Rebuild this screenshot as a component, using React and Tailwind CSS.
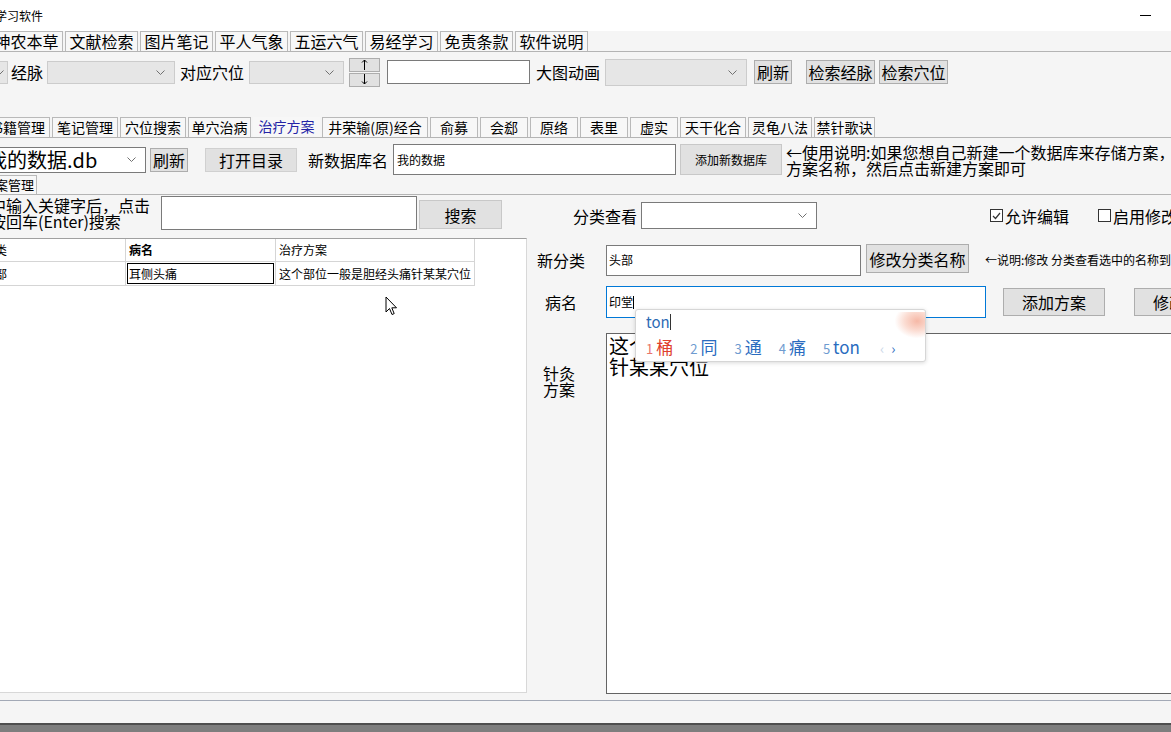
import React from 'react';

const topTabs = ['神农本草', '文献检索', '图片笔记', '平人气象', '五运六气', '易经学习', '免责条款', '软件说明'];

const subTabs = [
  { label: '书籍管理', w: 'w-[66px] -ml-[16px]' },
  { label: '笔记管理', w: 'w-[66px]' },
  { label: '穴位搜索', w: 'w-[66px]' },
  { label: '单穴治病', w: 'w-[63px]' },
  { label: '治疗方案', w: 'w-[67px]', active: true },
  { label: '井荣输(原)经合', w: 'w-[106px]' },
  { label: '俞募', w: 'w-[48px]' },
  { label: '会郄', w: 'w-[48px]' },
  { label: '原络', w: 'w-[48px]' },
  { label: '表里', w: 'w-[48px]' },
  { label: '虚实', w: 'w-[48px]' },
  { label: '天干化合', w: 'w-[66px]' },
  { label: '灵龟八法', w: 'w-[64px]' },
  { label: '禁针歌诀', w: 'w-[61px]' },
];

const candidates = ['同', '通', '痛', 'ton'];

function Chevron() {
  return (
    <svg width="9" height="5" viewBox="0 0 9 5" className="shrink-0">
      <polyline points="0.5,0.5 4.5,4.5 8.5,0.5" fill="none" stroke="#707070" strokeWidth="1" />
    </svg>
  );
}

function Combo({ className = '', children }) {
  return (
    <div className={`flex items-center justify-between pr-[9px] shrink-0 border ${className}`}>
      <div className="overflow-hidden whitespace-nowrap">{children}</div>
      <Chevron />
    </div>
  );
}

function Btn({ className = '', children }) {
  return (
    <div className={`flex items-center justify-center shrink-0 bg-[#e1e1e1] border border-[#adadad] whitespace-nowrap overflow-hidden ${className}`}>
      {children}
    </div>
  );
}

function Arrow({ down }) {
  return (
    <svg width="7" height="11" viewBox="0 0 7 11" className={down ? 'rotate-180' : ''}>
      <line x1="3.5" y1="1" x2="3.5" y2="11" stroke="#000" strokeWidth="1" />
      <polyline points="1,3.5 3.5,1 6,3.5" fill="none" stroke="#000" strokeWidth="1" />
    </svg>
  );
}

function Check({ checked }) {
  return (
    <span className="w-[13px] h-[13px] border border-[#333] bg-white flex items-center justify-center shrink-0">
      {checked && (
        <svg width="9" height="8" viewBox="0 0 9 8">
          <polyline points="1,4 3.5,6.5 8,1" fill="none" stroke="#333" strokeWidth="1.2" />
        </svg>
      )}
    </span>
  );
}

export default function App() {
  return (
    <div className="w-[1171px] h-[732px] overflow-hidden bg-[#f5f5f5] flex flex-col relative text-black font-['Noto_Sans_CJK_SC',sans-serif]">
      {/* title bar */}
      <div className="h-[31px] bg-white flex items-center justify-between shrink-0">
        <span className="text-[12px] leading-none -ml-[5px]">学习软件</span>
        <span className="w-[11px] h-[1px] bg-black mr-[20px]" />
      </div>

      {/* main tabs */}
      <div className="h-[21px] flex items-end border-b border-[#b4b4b4] shrink-0">
        {topTabs.map((t, i) => (
          <div
            key={t}
            className={`w-[73px] mr-[2px] h-[20px] border border-b-0 border-[#b9b9b9] bg-[#f7f7f7] text-[16px] leading-[19px] text-center shrink-0 ${i === 0 ? '-ml-[10px]' : ''}`}
          >
            {t}
          </div>
        ))}
      </div>

      {/* meridian row */}
      <div className="mt-[5px] h-[30px] flex items-center text-[16px] leading-none whitespace-nowrap shrink-0">
        <div className="-ml-[14px] w-[22px] h-[23px] bg-[#e6e6e6] border border-[#cccccc] flex items-center justify-end pr-[3px] shrink-0">
          <Chevron />
        </div>
        <span className="ml-[3px]">经脉</span>
        <Combo className="ml-[4px] w-[128px] h-[23px] bg-[#e6e6e6] border-[#cccccc]" />
        <span className="ml-[5px]">对应穴位</span>
        <Combo className="ml-[5px] w-[95px] h-[23px] bg-[#e6e6e6] border-[#cccccc]" />
        <div className="ml-[5px] w-[31px] h-[29px] flex flex-col gap-[1px] shrink-0">
          <Btn className="h-[14px]"><Arrow /></Btn>
          <Btn className="h-[14px]"><Arrow down /></Btn>
        </div>
        <div className="ml-[7px] w-[143px] h-[24px] bg-white border border-[#7a7a7a] shrink-0" />
        <span className="ml-[6px]">大图动画</span>
        <Combo className="ml-[5px] w-[142px] h-[27px] bg-[#e6e6e6] border-[#cccccc]" />
        <Btn className="ml-[7px] w-[38px] h-[24px]">刷新</Btn>
        <Btn className="ml-[14px] w-[69px] h-[24px]">检索经脉</Btn>
        <Btn className="ml-[4px] w-[69px] h-[24px]">检索穴位</Btn>
      </div>

      {/* sub tabs */}
      <div className="mt-[30px] h-[21px] flex items-end border-b border-[#b4b4b4] shrink-0">
        {subTabs.map((t) => (
          <div
            key={t.label}
            className={`${t.w} mr-[2px] h-[20px] text-[14px] leading-[19px] text-center shrink-0 whitespace-nowrap ${
              t.active ? 'text-[#2323a6] bg-[#f7f7f7]' : 'border border-b-0 border-[#b9b9b9] bg-[#f7f7f7]'
            }`}
          >
            {t.label}
          </div>
        ))}
      </div>

      {/* database row */}
      <div className="mt-[5px] h-[33px] flex items-center text-[16px] leading-none whitespace-nowrap shrink-0">
        <Combo className="-ml-[18px] w-[164px] h-[26px] bg-white border-[#7a7a7a] pl-[4px]">
          <span className="text-[20px] leading-none">我的数据.db</span>
        </Combo>
        <Btn className="ml-[4px] w-[38px] h-[24px]">刷新</Btn>
        <Btn className="ml-[17px] w-[92px] h-[24px] border-[#d0d0d0]">打开目录</Btn>
        <span className="ml-[11px] shrink-0">新数据库名</span>
        <div className="ml-[5px] w-[283px] h-[31px] bg-white border border-[#7a7a7a] flex items-center pl-[3px] text-[12px] shrink-0">
          我的数据
        </div>
        <Btn className="ml-[4px] w-[102px] h-[31px] text-[12px] border-[#c8c8c8]">添加新数据库</Btn>
        <div className="ml-[4px] text-[16px] leading-[16px] shrink-0">
          <div>←使用说明:如果您想自己新建一个数据库来存储方案，</div>
          <div>方案名称，然后点击新建方案即可</div>
        </div>
      </div>

      {/* inner tab */}
      <div className="h-[19px] flex items-end border-b border-[#b4b4b4] shrink-0">
        <div className="-ml-[21px] w-[58px] h-[19px] border border-b-0 border-[#b9b9b9] bg-[#f7f7f7] text-[13px] leading-[18px] text-center whitespace-nowrap shrink-0">
          方案管理
        </div>
      </div>

      {/* main area */}
      <div className="h-[505px] flex shrink-0">
        {/* left column */}
        <div className="w-[527px] flex flex-col shrink-0">
          <div className="mt-[1px] h-[34px] flex items-start whitespace-nowrap">
            <div className="-ml-[10px] w-[166px] text-[16px] leading-[16px] pt-[1px] shrink-0">
              <div>中输入关键字后，点击</div>
              <div>按回车(Enter)搜索</div>
            </div>
            <div className="ml-[5px] w-[256px] h-[34px] bg-white border border-[#7a7a7a] shrink-0" />
            <Btn className="ml-[2px] mt-[4px] w-[83px] h-[29px] text-[16px] border-[#c8c8c8]">搜索</Btn>
          </div>

          <div className="mt-[8px] h-[455px] bg-white border-t border-r border-b border-[#a0a0a0] border-r-[#d8d8d8] border-b-[#d8d8d8] overflow-hidden">
            <div className="-ml-[20px] w-[495px] text-[12px] whitespace-nowrap">
              <div className="h-[23px] flex border-b border-[#d5d5d5]">
                <div className="w-[146px] pl-[3px] leading-[22px] border-r border-[#d5d5d5]">分类</div>
                <div className="w-[150px] pl-[3px] leading-[22px] border-r border-[#d5d5d5] font-bold">病名</div>
                <div className="w-[199px] pl-[3px] leading-[22px] border-r border-[#d5d5d5]">治疗方案</div>
              </div>
              <div className="h-[24px] flex border-b border-[#d5d5d5]">
                <div className="w-[146px] pl-[3px] leading-[23px] border-r border-[#d5d5d5]">头部</div>
                <div className="w-[150px] leading-[23px] border-r border-[#d5d5d5] p-[1px]">
                  <div className="h-full border border-black pl-[1px] leading-[19px]">耳侧头痛</div>
                </div>
                <div className="w-[199px] pl-[3px] leading-[23px] border-r border-[#d5d5d5]">这个部位一般是胆经头痛针某某穴位</div>
              </div>
            </div>
          </div>
        </div>

        {/* right column */}
        <div className="flex-1 flex flex-col text-[16px] leading-none whitespace-nowrap">
          <div className="mt-[7px] h-[27px] flex items-center">
            <span className="ml-[46px] shrink-0">分类查看</span>
            <Combo className="ml-[4px] w-[176px] h-[27px] bg-white border-[#7a7a7a]" />
            <span className="ml-[173px] flex items-center gap-[2px] shrink-0"><Check checked />允许编辑</span>
            <span className="ml-[29px] flex items-center gap-[2px] shrink-0"><Check />启用修改</span>
          </div>

          <div className="mt-[15px] h-[32px] flex items-center">
            <span className="ml-[10px] shrink-0">新分类</span>
            <div className="ml-[21px] w-[255px] h-[31px] bg-white border border-[#7a7a7a] flex items-center pl-[2px] text-[12px] shrink-0">头部</div>
            <Btn className="ml-[5px] -mt-[3px] w-[103px] h-[29px]">修改分类名称</Btn>
            <span className="ml-[16px] text-[12px] shrink-0">←说明:修改 分类查看选中的名称到</span>
          </div>

          <div className="mt-[10px] h-[32px] flex items-center">
            <span className="ml-[18px] shrink-0">病名</span>
            <div className="ml-[29px] w-[380px] h-[32px] bg-white border border-[#0078d7] flex items-center pl-[2px] text-[12px] shrink-0">
              印堂<span className="w-[1px] h-[13px] bg-black" />
            </div>
            <Btn className="ml-[17px] w-[102px] h-[28px]">添加方案</Btn>
            <Btn className="ml-[29px] w-[102px] h-[28px]">修改方案</Btn>
          </div>

          <div className="mt-[15px] h-[361px] flex items-start">
            <div className="ml-[16px] mt-[32px] w-[32px] leading-[16px] shrink-0">
              <div>针灸</div>
              <div>方案</div>
            </div>
            <div className="ml-[31px] w-[600px] h-full bg-white border border-[#646464] text-[20px] leading-[21px] pl-[2px] pt-[1px] shrink-0">
              <div>这个部位一般是胆经头痛</div>
              <div>针某某穴位</div>
            </div>
          </div>
        </div>
      </div>

      {/* status bar */}
      <div className="h-[23px] border-t border-[#a3a9b6] bg-[#f5f5f5] shrink-0" />
      <div className="h-[9px] bg-[#7e7e7e] border-t-2 border-[#4f4f4f] shrink-0" />

      {/* IME candidate popup */}
      <div className="absolute left-[635px] top-[309px] w-[291px] h-[53px] bg-white border border-[#d6d6d6] rounded-[3px] shadow-[0_1px_4px_rgba(0,0,0,0.15)] overflow-hidden">
        <div className="absolute -right-[4px] top-[2px] w-[34px] h-[26px] bg-[radial-gradient(ellipse_at_65%_35%,#f6b8a6_0%,#fbdcd2_40%,transparent_72%)]" />
        <div className="relative ml-[10px] mt-[2px] flex items-center text-[15px] leading-[20px] text-[#2d6bb5]">
          ton<span className="w-[1px] h-[16px] bg-[#333]" />
        </div>
        <div className="relative ml-[10px] mt-[5px] flex items-baseline text-[17px] leading-[20px] text-[#2a6cbf] whitespace-nowrap">
          <span className="text-[13px] text-[#e8766b]">1</span>
          <span className="ml-[3px] text-[#e0402d]">桶</span>
          {candidates.map((c, i) => (
            <React.Fragment key={c}>
              <span className="ml-[17px] text-[13px] text-[#6e9bd0]">{i + 2}</span>
              <span className="ml-[3px]">{c}</span>
            </React.Fragment>
          ))}
          <span className="ml-[20px] text-[14px] text-[#c8d6e8]">‹</span>
          <span className="ml-[7px] text-[14px] text-[#2a6cbf]">›</span>
        </div>
      </div>

      {/* mouse pointer */}
      <svg className="absolute left-[385px] top-[296px]" width="13" height="20" viewBox="0 0 13 20">
        <path d="M1 1 L1 16 L4.5 12.5 L7 18.5 L9.2 17.6 L6.8 11.8 L11.5 11.8 Z" fill="#fff" stroke="#000" strokeWidth="1" strokeLinejoin="round" />
      </svg>
    </div>
  );
}
